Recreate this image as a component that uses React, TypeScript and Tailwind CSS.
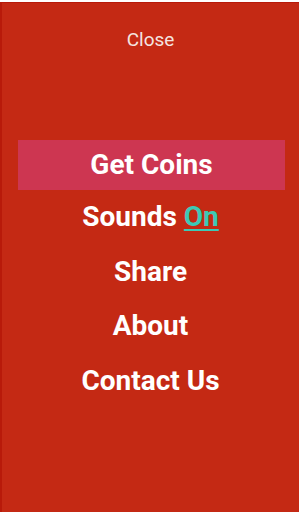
import React from 'react';

const items = [
  { label: 'Share', h: 'h-[55px]' },
  { label: 'About', h: 'h-[54px]' },
  { label: 'Contact Us', h: 'h-[55px]' },
];

const App: React.FC = () => {
  return (
    <div className="w-[300px] h-[514px] bg-white pt-[2px] pr-[1px] pb-[2px]" style={{ fontFamily: 'Roboto, "Liberation Sans", sans-serif' }}>
      <div className="h-full flex flex-col bg-[#c42914] border-l-2 border-t border-[#b81a0a]">
        <div className="pt-[26px] text-center text-[19px] leading-[22px] text-[#f4e4e0]">Close</div>
        <div className="mt-[89px] flex flex-col">
          <div className="ml-[16px] mr-[14px] h-[50px] flex items-center justify-center bg-[#cd3651] text-white font-bold text-[28px]">
            Get Coins
          </div>
          <div className="h-[54px] flex items-center justify-center text-white font-bold text-[28px]">
            Sounds&nbsp;<span className="text-[#3dc9b5] underline underline-offset-[3px] decoration-2">On</span>
          </div>
          {items.map(item => (
            <div key={item.label} className={`${item.h} flex items-center justify-center text-white font-bold text-[28px]`}>
              {item.label}
            </div>
          ))}
        </div>
      </div>
    </div>
  );
};

export default App;
